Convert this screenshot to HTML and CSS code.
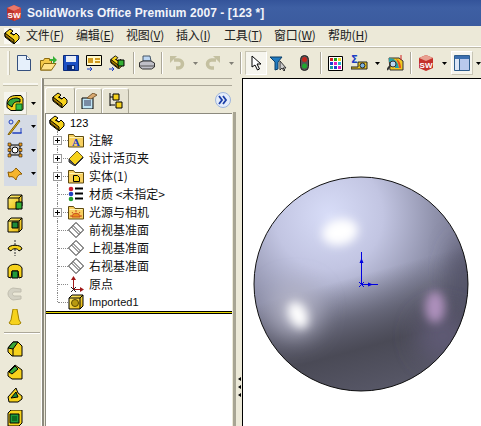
FILE: index.html
```html
<!DOCTYPE html>
<html lang="zh-CN">
<head>
  <meta charset="UTF-8">
  <title>SolidWorks Office Premium 2007</title>
  <link rel="stylesheet" href="styles.css">
</head>
<body>

  <svg class="defs" width="0" height="0">
    <defs>
      <linearGradient id="gold" x1="0" y1="0" x2="1" y2="1">
        <stop offset="0" stop-color="#fff27a"/>
        <stop offset="1" stop-color="#e8b400"/>
      </linearGradient>
      <symbol id="part" viewBox="0 0 16 16">
        <path d="M1 5 6 1l3 2-2 2 3 2 2-2 3 3v3l-5 5-9-7z" fill="#f6d21c" stroke="#000"/>
        <path d="M1 5v3l9 7v-3zM6 5l4 2" fill="#a87c00" stroke="#000"/>
      </symbol>
      <symbol id="box" viewBox="0 0 16 16">
        <path d="M1 4 4 1h11v11l-3 3H1z" fill="url(#gold)" stroke="#000"/>
        <path d="M12 15V4H1M12 4l3-3" fill="none" stroke="#000"/>
      </symbol>
      <symbol id="folder" viewBox="0 0 16 16">
        <path d="M.5 15V2.500h5l1.500 2h8.500V15z" fill="#f8d060" stroke="#5f4a10"/>
        <path d="M1.500 5.500h13" stroke="#fff3b0"/>
      </symbol>
      <symbol id="plane" viewBox="0 0 16 16">
        <path d="M8 .5 15.500 8 8 15.500.5 8z" fill="#fff" stroke="#222"/>
        <path d="M5 3.500 12.500 11M3.500 5 11 12.500" stroke="#444" fill="none"/>
      </symbol>
      <symbol id="caret" viewBox="0 0 5 3">
        <path d="M0 0h5L2.500 3z" fill="#000"/>
      </symbol>
      <symbol id="round-cut" viewBox="0 0 16 16">
        <path d="M1 7 6 1h5l4 4v10H5L1 11z" fill="#f6d21c" stroke="#000"/>
        <path d="M1 7 6 1h5L6 8z" fill="#3aa63a" stroke="#000"/>
        <path d="M6 8v7" stroke="#000"/>
      </symbol>
    </defs>
  </svg>

  <header class="title-bar">
    <svg width="16" height="16" viewBox="0 0 16 16">
      <path d="M1 3 8 0l7 3v10l-7 3-7-3z" fill="#b8322c"/>
      <path d="M8 0l7 3-7 3-7-3z" fill="#e8786a"/>
      <path d="M8 6v10l7-3V3z" fill="#d8453a"/>
      <text x="8" y="12.500" class="logo-text">SW</text>
    </svg>
    <span class="title-text">SolidWorks Office Premium 2007 - [123 *]</span>
  </header>

  <nav class="menu-bar">
    <svg class="menu-logo" width="16" height="16"><use href="#part"/></svg>
    <span class="menu-item">文件(<u>F</u>)</span>
    <span class="menu-item">编辑(<u>E</u>)</span>
    <span class="menu-item">视图(<u>V</u>)</span>
    <span class="menu-item narrow">插入(<u>I</u>)</span>
    <span class="menu-item">工具(<u>T</u>)</span>
    <span class="menu-item wide">窗口(<u>W</u>)</span>
    <span class="menu-item">帮助(<u>H</u>)</span>
  </nav>

  <div class="toolbar">
    <span class="grip"></span>
    <!-- new -->
    <svg class="tool t-new" width="14" height="16" viewBox="0 0 14 16"><path d="M.5.500h9l4 4v11H.5z" fill="#e6f0fb" stroke="#35507e"/><path d="M9.500.500v4h4" fill="#fff" stroke="#35507e"/></svg>
    <!-- open -->
    <svg class="tool t-open" width="17" height="16" viewBox="0 0 17 16"><path d="M.5 15V5.500h3l1-2h5v2h2V15z" fill="#f5c94a" stroke="#8a6a10"/><path d="M.5 15 4 8.500h12L11.500 15z" fill="#ffe28a" stroke="#8a6a10"/><path d="M10 4h3V1l4 4-4 4V6h-3z" fill="#35b035"/></svg>
    <!-- save -->
    <svg class="tool t-save" width="16" height="16" viewBox="0 0 16 16"><path d="M.5.500h15v15H.5z" fill="#1c4fc4" stroke="#0b2a78"/><path d="M3 1h10v6H3z" fill="#e8eef8"/><path d="M4 10h8v5H4z" fill="#0b2a78"/><path d="M9 11h2v3H9z" fill="#cfd8ea"/></svg>
    <!-- properties -->
    <svg class="tool t-prop" width="17" height="16" viewBox="0 0 17 16"><path d="M.5.500h15v10H.5z" fill="#fff8c8" stroke="#000"/><path d="M2 3h5v5H2zM9 3h5v2H9zM9 6h5v2H9z" fill="#d09a20"/><path d="M1 14h5M4 12l2 2-2 2" stroke="#1c3fc4" fill="none"/></svg>
    <!-- part to assembly -->
    <svg class="tool t-asm" width="17" height="16" viewBox="0 0 17 16"><use href="#part" width="16" height="14"/><path d="M9 5h6v6H9z" fill="#35b035" stroke="#000"/><path d="M0 14h5M3 12l2 2-2 2" stroke="#1c3fc4" fill="none"/></svg>
    <span class="sep s-1"></span>
    <!-- print -->
    <svg class="tool t-print" width="16" height="16" viewBox="0 0 16 16"><path d="M4 1h7l1 5H4z" fill="#bcd6f2" stroke="#456"/><path d="M.5 7.500 4 6h8l3.500 2v4l-3 2h-9l-3-2z" fill="#c0c0c8" stroke="#333"/><path d="M1 11h14" stroke="#555"/></svg>
    <span class="sep s-2"></span>
    <!-- undo -->
    <svg class="tool t-undo" width="16" height="16" viewBox="0 0 16 16"><path d="M5 5h4.500a3.500 3.500 0 0 1 0 8H7" fill="none" stroke="#c4c0a0" stroke-width="3.500"/><path d="M1 1h7L1 8z" fill="#c4c0a0"/></svg>
    <svg class="caret-icon c-undo" width="5" height="3"><use href="#caret"/></svg>
    <!-- redo -->
    <svg class="tool t-redo" width="16" height="16" viewBox="0 0 16 16"><path d="M11 5H6.500a3.500 3.500 0 0 0 0 8H9" fill="none" stroke="#c4c0a0" stroke-width="3.500"/><path d="M15 1H8l7 7z" fill="#c4c0a0"/></svg>
    <svg class="caret-icon c-redo" width="5" height="3"><use href="#caret"/></svg>
    <span class="sep s-3"></span>
    <!-- select -->
    <span class="tool-pressed">
      <svg width="11" height="16" viewBox="0 0 11 16"><path d="M1 1v11l3-2 2.500 5 2-1L6 9h4z" fill="#fff" stroke="#000"/></svg>
    </span>
    <!-- filter -->
    <svg class="tool t-filter" width="17" height="15" viewBox="0 0 17 15"><path d="M0 1h12L8 6v7L5 14V6z" fill="#1f7ac0" stroke="#0b3d66"/><path d="M10 5v9l2-2 2 3 1-1-2-2h3z" fill="#ccc" stroke="#333"/></svg>
    <!-- rebuild -->
    <svg class="tool t-light" width="9" height="16" viewBox="0 0 9 16"><rect x=".5" y=".5" width="8" height="15" rx="4" fill="#555" stroke="#222"/><circle cx="4.500" cy="4.500" r="2.500" fill="#c4261c"/><circle cx="4.500" cy="11" r="2.500" fill="#1ea82e"/></svg>
    <span class="sep s-4"></span>
    <!-- options grid -->
    <svg class="tool t-grid" width="15" height="15" viewBox="0 0 15 15"><path d="M.5.500h14v14H.5z" fill="#fff" stroke="#000"/><path d="M2 2h3v3H2z" fill="#d02020"/><path d="M6 2h3v3H6z" fill="#20a020"/><path d="M10 2h3v3h-3z" fill="#e8d820"/><path d="M2 6h3v3H2z" fill="#2040d0"/><path d="M6 6h3v3H6z" fill="#e020c0"/><path d="M10 6h3v3h-3z" fill="#20b0d0"/><path d="M2 10h3v3H2z" fill="#20a0a0"/><path d="M6 10h3v3H6z" fill="#2040d0"/><path d="M10 10h3v3h-3z" fill="#e020c0"/></svg>
    <!-- measure -->
    <svg class="tool t-measure" width="17" height="16" viewBox="0 0 17 16"><text x="0" y="8" class="sigma">Σ</text><path d="M7 7h9v7H0v-2h7z" fill="#f0c820" stroke="#222"/><circle cx="11.500" cy="10.500" r="2.500" fill="#7ab0e0" stroke="#222"/></svg>
    <svg class="caret-icon c-measure" width="5" height="3"><use href="#caret"/></svg>
    <!-- display -->
    <svg class="tool t-display" width="17" height="16" viewBox="0 0 17 16"><path d="M2 3h10l4 3v9H3z" fill="#f0c820" stroke="#333"/><path d="M2 3c5 0 9 3 10 10H8C8 9 6 7 2 7z" fill="#26a0a8"/><path d="M9 4c3 1 5 4 5 9h-2c0-4-2-7-3-9z" fill="#e8501c"/><circle cx="6" cy="9" r="3" fill="#bcd6f2" stroke="#333"/><path d="M3 11 0 15" stroke="#333" stroke-width="2"/><path d="M14 0v5" stroke="#d02020"/></svg>
    <span class="sep s-5"></span>
    <!-- solidworks resources -->
    <svg class="tool t-sw" width="16" height="16" viewBox="0 0 16 16"><path d="M1 3 8 0l7 3v10l-7 3-7-3z" fill="#c4302a"/><path d="M8 0l7 3-7 3-7-3z" fill="#e8a090"/><text x="8" y="12.500" class="logo-text">SW</text></svg>
    <svg class="caret-icon c-sw" width="5" height="3"><use href="#caret"/></svg>
    <!-- viewport -->
    <span class="tool-window">
      <svg width="16" height="16" viewBox="0 0 16 16"><path d="M.5.500h15v15H.5z" fill="#b9c9ec" stroke="#2f5d8c"/><path d="M1 1h14v3H1z" fill="#3c6fb0"/><path d="M5.500 4v11" stroke="#2f5d8c"/><path d="M1 4h4v11H1z" fill="#dde6f6"/></svg>
    </span>
    <svg class="caret-icon c-win" width="5" height="3"><use href="#caret"/></svg>
  </div>

  <div class="workspace">
    <aside class="command-bar">
      <span class="cmd-grip"></span>
      <div class="cmd-top">
        <span class="cmd-button">
          <svg width="18" height="16" viewBox="0 0 18 16"><path d="M1 8C1 3 5 .5 10 .5h5l2 3v11l-2 1H5l-4-3z" fill="#f6d21c" stroke="#000"/><path d="M1.500 9C2 5 6 3 11 3l3 1v3C9 6 7 8 6 12z" fill="#35a83a" stroke="#000"/><path d="M10 9h6v6h-6z" fill="#35c04a" stroke="#0a5a1c"/></svg>
        </span>
        <svg class="caret-icon" width="5" height="3"><use href="#caret"/></svg>
      </div>
      <div class="cmd-group">
        <div class="cmd-row">
          <svg width="16" height="16" viewBox="0 0 16 16"><circle cx="4" cy="3" r="2" fill="none" stroke="#2040c0"/><path d="M12 1 2 14l-1 2 2-1L13 2z" fill="#f0c820" stroke="#7a5a00"/><path d="M5 14h10M14 9v5H6" fill="none" stroke="#2040c0"/></svg>
          <svg class="caret-icon" width="5" height="3"><use href="#caret"/></svg>
        </div>
        <div class="cmd-row">
          <svg width="16" height="16" viewBox="0 0 16 16"><path d="M3 3h10v10H3z" fill="#ccc" stroke="#000"/><circle cx="8" cy="8" r="3" fill="#fff" stroke="#000"/><path d="M1 1h3v3H1zM12 1h3v3h-3zM1 12h3v3H1zM12 12h3v3h-3zM1 6.500h3v3H1zM12 6.500h3v3h-3z" fill="#e89a20" stroke="#000" stroke-width=".5"/></svg>
          <svg class="caret-icon" width="5" height="3"><use href="#caret"/></svg>
        </div>
        <div class="cmd-row">
          <svg width="16" height="16" viewBox="0 0 16 16"><path d="M1 6c3 1 5 0 8-4l6 6c-3 0-5 2-6 6C7 11 5 10 2 11z" fill="#f6b52c" stroke="#8a5a00"/></svg>
          <svg class="caret-icon" width="5" height="3"><use href="#caret"/></svg>
        </div>
      </div>
      <div class="cmd-icons">
        <svg width="16" height="16"><use href="#box"/><path d="M9 8h6v7H9z" fill="#35b035" stroke="#000"/></svg>
        <svg width="16" height="16"><use href="#box"/><path d="M5 5h6v6H5z" fill="#1e8a3a" stroke="#000"/></svg>
        <svg width="16" height="16" viewBox="0 0 16 16"><path d="M8 0v16" stroke="#333" stroke-dasharray="2 1"/><path d="M1 9c0-5 14-5 14 0l-3 2c-1-3-7-3-8 0z" fill="#f6d21c" stroke="#000"/></svg>
        <svg width="16" height="16" viewBox="0 0 16 16"><path d="M1 5c2-5 12-5 14 0v9l-3 1-1-7H5l-1 7-3-1z" fill="#f6d21c" stroke="#000"/><path d="M5 8h6v7H5z" fill="#1e9a3a" stroke="#000"/></svg>
        <svg width="16" height="16" viewBox="0 0 16 16"><path d="M14 3 6 2C2 3 1 6 1 8s2 5 5 6l8-1v-3H7C5 9 5 7 7 6h7z" fill="#d4d2c4" stroke="#c0bdae"/></svg>
        <svg width="16" height="16" viewBox="0 0 16 16"><path d="M6 0h4l2 11 2 3-3 2H5l-3-2 2-3z" fill="#f6d21c" stroke="#a08000"/></svg>
        <span class="cmd-sep"></span>
        <svg width="16" height="16"><use href="#round-cut"/></svg>
        <svg width="16" height="16" viewBox="0 0 16 16"><path d="M1 8 8 1l7 5v9H5l-4-3z" fill="#f6d21c" stroke="#000"/><path d="M2 8l6-6 3 3-6 5z" fill="#3aa63a" stroke="#000"/></svg>
        <svg width="16" height="16" viewBox="0 0 16 16"><path d="M1 10 9 1l2 5 4 3v3l-4 3H2z" fill="#f6d21c" stroke="#000"/><path d="M4 11 9 5l2 5z" fill="#1e8a3a" stroke="#000"/></svg>
        <svg width="16" height="16" viewBox="0 0 16 16"><path d="M1 3 4 0h11v13l-3 3H1z" fill="#f6d21c" stroke="#000"/><path d="M3 4h9v9H3z" fill="#1e9a3a" stroke="#000"/><path d="M5 6h5v5H5z" fill="#0c6a20"/></svg>
      </div>
    </aside>

    <section class="manager">
      <div class="tabs">
        <span class="tab tab-active"><svg width="16" height="16"><use href="#part"/></svg></span>
        <span class="tab">
          <svg width="16" height="16" viewBox="0 0 16 16"><path d="M1 5h11v11H1z" fill="#bfe4f5" stroke="#000"/><path d="M3 8h7M3 10h7M3 12h7" stroke="#335"/><path d="M6 5 12 0l4 2-6 4z" fill="#d8a870" stroke="#7a5a30"/></svg>
        </span>
        <span class="tab">
          <svg width="16" height="16" viewBox="0 0 16 16"><path d="M2 0v13M2 4h5M2 12h5" stroke="#000" fill="none"/><path d="M5 1h6v6H5zM8 9h6v6H8z" fill="#f6d21c" stroke="#000"/></svg>
        </span>
        <span class="expand-btn">
          <svg width="16" height="16" viewBox="0 0 16 16"><circle cx="8" cy="8" r="7.500" fill="#e4ecfa" stroke="#9db4dc"/><path d="M4 4l3 4-3 4M8 4l3 4-3 4" fill="none" stroke="#1c3fa8" stroke-width="1.800"/></svg>
        </span>
      </div>

      <div class="tree">
        <div class="root-row">
          <svg width="16" height="16"><use href="#part"/></svg>
          <span class="latin">123</span>
        </div>
        <ul class="nodes">
          <li class="node"><span class="plus"></span>
            <span class="node-icon"><svg width="16" height="16"><use href="#folder"/><text x="8" y="14" class="folder-a">A</text></svg></span>
            <span class="label">注解</span></li>
          <li class="node"><span class="plus"></span>
            <span class="node-icon"><svg width="16" height="16" viewBox="0 0 16 16"><path d="M1 9 9 1l6 6-8 8z" fill="#f6d21c" stroke="#6a5a20"/><path d="M1 9v3l6 4 8-8V7l-8 8z" fill="#555" stroke="#333"/></svg></span>
            <span class="label">设计活页夹</span></li>
          <li class="node"><span class="plus"></span>
            <span class="node-icon"><svg width="16" height="16"><use href="#folder"/><path d="M5.500 7.500h4l2 2v4h-6z" fill="#f6d21c" stroke="#000"/></svg></span>
            <span class="label">实体(1)</span></li>
          <li class="node"><span class="no-plus"></span>
            <span class="node-icon"><svg width="16" height="16" viewBox="0 0 16 16"><circle cx="3" cy="3" r="2.300" fill="#d02030"/><circle cx="3" cy="8" r="2.300" fill="#2040c0"/><circle cx="3" cy="13" r="2.300" fill="#20a030"/><path d="M7 2.500h8M7 7.500h8M7 12.500h8" stroke="#000" stroke-width="2"/></svg></span>
            <span class="label">材质 &lt;未指定&gt;</span></li>
          <li class="node"><span class="plus"></span>
            <span class="node-icon"><svg width="16" height="16"><use href="#folder"/><path d="M4 13c0-5 8-5 8 0zM8 6v2M4 8l1 1.500M12 8l-1 1.500M2 12h2M12 12h2" fill="#e8901c" stroke="#c8481c"/></svg></span>
            <span class="label">光源与相机</span></li>
          <li class="node"><span class="no-plus"></span>
            <span class="node-icon"><svg width="16" height="16"><use href="#plane"/></svg></span>
            <span class="label">前视基准面</span></li>
          <li class="node"><span class="no-plus"></span>
            <span class="node-icon"><svg width="16" height="16"><use href="#plane"/></svg></span>
            <span class="label">上视基准面</span></li>
          <li class="node"><span class="no-plus"></span>
            <span class="node-icon"><svg width="16" height="16"><use href="#plane"/></svg></span>
            <span class="label">右视基准面</span></li>
          <li class="node"><span class="no-plus"></span>
            <span class="node-icon"><svg width="16" height="16" viewBox="0 0 16 16"><path d="M5.500 2v12M5.500 13.500H15" stroke="#a01818" fill="none"/><path d="M5.500 0l2.500 4H3zM16 13.500l-4 2.500v-5z" fill="#a01818"/><path d="M3 11l5 5M8 11l-5 5" stroke="#222"/></svg></span>
            <span class="label">原点</span></li>
          <li class="node last"><span class="no-plus"></span>
            <span class="node-icon"><svg width="16" height="16"><use href="#box"/><circle cx="7" cy="9" r="3.500" fill="#b89a10" stroke="#5a4a00"/></svg></span>
            <span class="latin">Imported1</span></li>
        </ul>
        <div class="rollback"></div>
      </div>
    </section>

    <div class="splitter">
      <span class="split-arrow"></span>
      <span class="split-arrow"></span>
      <span class="split-arrow"></span>
    </div>

    <main class="viewport">
      <svg width="216" height="216" viewBox="0 0 216 216">
        <defs>
          <radialGradient id="body" cx="35%" cy="18%" r="90%">
            <stop offset="0" stop-color="#d8ddf8"/>
            <stop offset=".28" stop-color="#c2c5e2"/>
            <stop offset=".55" stop-color="#9092ac"/>
            <stop offset=".8" stop-color="#6e6e86"/>
            <stop offset="1" stop-color="#5e5e76"/>
          </radialGradient>
          <linearGradient id="shade" x1=".36" y1="0" x2=".64" y2="1">
            <stop offset=".46" stop-color="#4a4a56" stop-opacity="0"/>
            <stop offset=".64" stop-color="#4a4a56" stop-opacity=".6"/>
            <stop offset=".78" stop-color="#4a4a56"/>
            <stop offset="1" stop-color="#585868"/>
          </linearGradient>
          <filter id="soft" x="-50%" y="-50%" width="200%" height="200%"><feGaussianBlur stdDeviation="5"/></filter>
          <filter id="softer" x="-80%" y="-80%" width="260%" height="260%"><feGaussianBlur stdDeviation="12"/></filter>
          <clipPath id="disc"><circle cx="108" cy="108" r="107"/></clipPath>
        </defs>
        <circle cx="108" cy="108" r="107" fill="url(#body)"/>
        <circle cx="108" cy="108" r="107" fill="url(#shade)"/>
        <g clip-path="url(#disc)">
          <ellipse cx="212" cy="105" rx="14" ry="40" fill="#55546a" filter="url(#softer)"/>
          <ellipse cx="190" cy="160" rx="26" ry="26" fill="#5e5a74" filter="url(#softer)"/>
          <ellipse cx="42" cy="135" rx="24" ry="26" fill="#b4b4c6" filter="url(#softer)"/>
          <ellipse cx="87" cy="56" rx="18" ry="13" fill="#fff" filter="url(#soft)" transform="rotate(-12 87 56)"/>
          <ellipse cx="45" cy="139" rx="9" ry="14" fill="#fff" filter="url(#soft)" transform="rotate(-25 45 139)"/>
          <ellipse cx="182" cy="131" rx="10" ry="16" fill="#ad90bc" filter="url(#soft)"/>
        </g>
        <circle cx="108" cy="108" r="107" fill="none" stroke="#111"/>
        <path d="M108.500 108V76M108.500 108.500H125M106 106l5 5M111 106l-5 5" fill="none" stroke="#0000e0"/>
        <path d="M108.500 82l2 5h-4zM120 108.500l-5 2v-4z" fill="#0000e0"/>
      </svg>
    </main>
  </div>

</body>
</html>
```

FILE: styles.css
```css
* {
  box-sizing: border-box;
}
html, body {
  margin: 0;
  height: 426px;
  overflow: hidden;
}
body {
  width: 481px;
  background: #ece9d8;
  font-family: "Noto Sans CJK SC", "Liberation Sans", sans-serif;
  font-size: 12px;
  color: #000;
  display: flex;
  flex-direction: column;
}
svg {
  display: block;
  flex: none;
}
.defs {
  position: absolute;
}
.latin {
  font: 11px "Liberation Sans", sans-serif;
}

/* title bar */
.title-bar {
  height: 26px;
  flex: none;
  background: linear-gradient(#34549a, #3e5fa3 30%, #3b5b9e);
  display: flex;
  align-items: center;
  padding-left: 6px;
}
.logo-text {
  font: bold 8px "Liberation Sans", sans-serif;
  fill: #fff;
  text-anchor: middle;
}
.title-text {
  margin-left: 5px;
  font: bold 12px "Liberation Sans", sans-serif;
  color: #f2f4fa;
  letter-spacing: .07px;
  white-space: nowrap;
}

/* menu */
.menu-bar {
  height: 21px;
  flex: none;
  display: flex;
  align-items: center;
  padding-left: 4px;
  border-bottom: 1px solid #fff;
}
.menu-logo {
  margin-right: 6px;
  background: #faf9f3;
}
.menu-item {
  width: 50px;
  line-height: 14px;
  padding-bottom: 2px;
  white-space: nowrap;
  letter-spacing: -.2px;
  color: #222;
}
.menu-item.narrow {
  width: 48px;
}
.menu-item.wide {
  width: 54px;
}

/* toolbar */
.toolbar {
  height: 31px;
  flex: none;
  display: flex;
  align-items: center;
  padding-left: 7px;
  border-top: 1px solid #bdb9a6;
}
.grip {
  width: 3px;
  height: 24px;
  background: #f7f6ef;
  border-right: 1px solid #c4c0ab;
  margin-right: 7px;
}
.sep {
  width: 2px;
  height: 22px;
  flex: none;
  border-left: 1px solid #aca899;
  border-right: 1px solid #fff;
}
.caret-icon {
  flex: none;
}
.sigma {
  font: bold 10px "DejaVu Sans", sans-serif;
  fill: #1c3fc4;
}
.t-open { margin-left: 9px; }
.t-save { margin-left: 6px; }
.t-prop { margin-left: 7px; }
.t-asm { margin-left: 6px; }
.s-1 { margin-left: 7px; }
.t-print { margin-left: 4px; }
.s-2 { margin-left: 6px; }
.t-undo { margin-left: 6px; }
.c-undo { margin-left: 8px; opacity: .45; }
.t-redo { margin-left: 7px; }
.c-redo { margin-left: 8px; opacity: .45; }
.s-3 { margin-left: 6px; }
.tool-pressed {
  width: 22px;
  height: 24px;
  margin-left: 3px;
  flex: none;
  display: flex;
  align-items: center;
  justify-content: center;
  background: #f6f5ee;
  border: 1px solid #fff;
  border-left-color: #c8c5b4;
  border-top-color: #c8c5b4;
}
.t-filter { margin-left: 3px; }
.t-light { margin-left: 13px; }
.s-4 { margin-left: 11px; }
.t-grid { margin-left: 6px; }
.t-measure { margin-left: 8px; }
.c-measure { margin-left: 7px; }
.t-display { margin-left: 7px; }
.s-5 { margin-left: 6px; }
.t-sw { margin-left: 6px; }
.c-sw { margin-left: 8px; }
.tool-window {
  width: 22px;
  height: 24px;
  margin-left: 4px;
  flex: none;
  display: flex;
  align-items: center;
  justify-content: center;
  background: #f6f5ee;
  border: 1px solid #fff;
  border-right-color: #c8c5b4;
  border-bottom-color: #c8c5b4;
}
.c-win { margin-left: 3px; }

/* main area */
.workspace {
  flex: 1;
  display: flex;
  min-height: 0;
}
.command-bar {
  width: 42px;
  flex: none;
  display: flex;
  flex-direction: column;
  padding-top: 5px;
  border-right: 1px solid #fff;
}
.cmd-grip {
  height: 3px;
  margin: 0 3px 6px 3px;
  background: #f7f6ef;
  border-bottom: 1px solid #c4c0ab;
}
.cmd-top {
  display: flex;
  align-items: center;
  height: 23px;
  padding-left: 4px;
  gap: 4px;
}
.cmd-button {
  width: 23px;
  height: 23px;
  display: flex;
  align-items: center;
  justify-content: center;
  background: #f6f5ee;
  border-right: 1px solid #c8c5b4;
  border-bottom: 1px solid #c8c5b4;
}
.cmd-group {
  background: #d5dbe5;
  margin: 0 4px;
  height: 71px;
}
.cmd-row {
  height: 23.500px;
  display: flex;
  align-items: center;
  padding-left: 3px;
  gap: 8px;
}
.cmd-icons {
  display: flex;
  flex-direction: column;
  align-items: flex-start;
  padding: 8px 0 0 7px;
  gap: 7px;
}
.cmd-sep {
  width: 36px;
  height: 2px;
  margin-left: -3px;
  border-top: 1px solid #aca899;
  border-bottom: 1px solid #fff;
}

/* feature manager */
.manager {
  width: 190px;
  flex: none;
  display: flex;
  flex-direction: column;
  border-left: 2px solid #8c8a7e;
  border-top: 1px solid #aca899;
}
.tabs {
  height: 28px;
  margin-top: 6px;
  margin-right: -3px;
  flex: none;
  display: flex;
  align-items: flex-end;
  padding-left: 1px;
  border-top: 1px solid #aca899;
}
.tab {
  width: 27px;
  height: 25px;
  display: flex;
  justify-content: center;
  padding-top: 4px;
  background: #e6e3d2;
  border: 1px solid #fff;
  border-right-color: #a8a594;
  border-bottom: 0;
  border-radius: 3px 3px 0 0;
}
.tab-active {
  width: 30px;
  height: 26px;
  background: #ece9d8;
}
.expand-btn {
  margin-left: auto;
  margin-right: 4px;
  margin-bottom: 5px;
}
.tree {
  flex: 1;
  margin-left: 1px;
  background: #fff;
  border-left: 1px solid #8c8a7e;
  border-top: 1px solid #8c8a7e;
}
.root-row {
  height: 17px;
  display: flex;
  align-items: center;
  gap: 5px;
  padding-left: 3px;
}
.nodes {
  list-style: none;
  margin: 0;
  padding: 0;
}
.node {
  position: relative;
  height: 18px;
  display: flex;
  align-items: center;
  padding-left: 7px;
  white-space: nowrap;
  color: #111;
}
.node::before {
  content: "";
  position: absolute;
  left: 11px;
  top: 0;
  bottom: 0;
  border-left: 1px dotted #8a8a8a;
}
.node.last::before {
  bottom: 9px;
}
.node::after {
  content: "";
  position: absolute;
  left: 12px;
  width: 10px;
  top: 9px;
  border-top: 1px dotted #8a8a8a;
}
.plus, .no-plus {
  width: 9px;
  height: 9px;
  flex: none;
  margin-right: 6px;
  position: relative;
  z-index: 1;
}
.plus {
  background:
    linear-gradient(#000, #000) center / 5px 1px no-repeat,
    linear-gradient(#000, #000) center / 1px 5px no-repeat,
    #fff;
  border: 1px solid #9a9a9a;
}
.node-icon {
  width: 16px;
  margin-right: 5px;
  flex: none;
  position: relative;
  z-index: 1;
}
.label {
  padding-bottom: 2px;
}
.folder-a {
  font: bold 11px "Liberation Serif", serif;
  fill: #1c3fc4;
  text-anchor: middle;
}
.rollback {
  height: 3px;
  background: #e6d800;
  border-top: 1px solid #000;
  border-bottom: 1px solid #000;
}

/* splitter */
.splitter {
  width: 10px;
  flex: none;
  background: linear-gradient(#a8a594, #a8a594) 1px 34px / 3px 100% no-repeat #ece9d8;
  display: flex;
  flex-direction: column;
  justify-content: flex-end;
  align-items: flex-end;
  gap: 4px;
  padding: 0 1px 29px 0;
}
.split-arrow {
  width: 0;
  height: 0;
  border: 2px solid transparent;
  border-right: 3px solid #000;
  border-left: 0;
}

/* graphics area */
.viewport {
  flex: 1;
  min-width: 0;
  background: #fff;
  border-left: 1px solid #000;
  border-top: 1px solid #000;
  padding: 97px 0 0 10px;
}
```
